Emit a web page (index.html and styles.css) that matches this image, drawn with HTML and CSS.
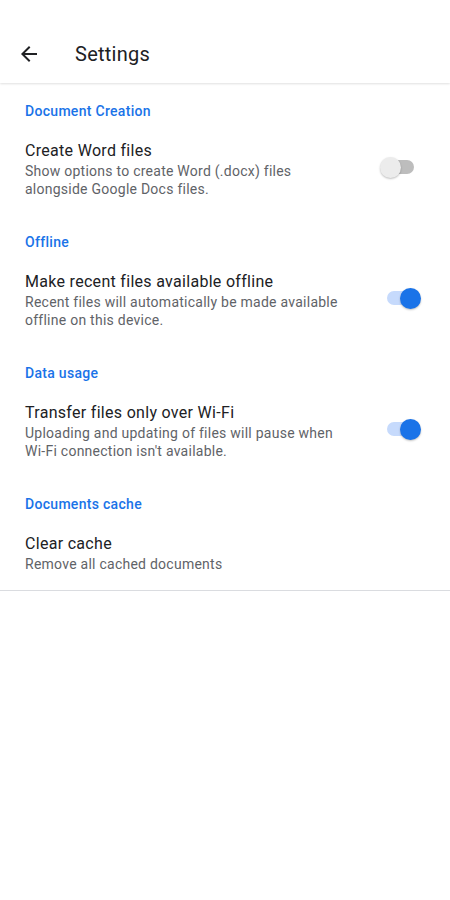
FILE: index.html
```html
<!DOCTYPE html>
<html>
<head>
<meta charset="utf-8">
<link rel="stylesheet" href="styles.css">
</head>
<body>
<div class="app">
  <header class="topbar">
    <button class="back" aria-label="Back">
      <svg width="24" height="24" viewBox="0 0 24 24"><path d="M20 11H7.83l5.59-5.59L12 4l-8 8 8 8 1.41-1.41L7.83 13H20v-2z" fill="#202124"/></svg>
    </button>
    <h1 class="title">Settings</h1>
  </header>
  <main class="list">
    <section class="section">
      <h2 class="section-title">Document Creation</h2>
      <div class="item">
        <div class="text">
          <div class="item-title">Create Word files</div>
          <div class="item-sub">Show options to create Word (.docx) files alongside Google Docs files.</div>
        </div>
        <div class="switch"><span class="track"></span><span class="thumb"></span></div>
      </div>
    </section>
    <section class="section">
      <h2 class="section-title">Offline</h2>
      <div class="item">
        <div class="text">
          <div class="item-title">Make recent files available offline</div>
          <div class="item-sub">Recent files will automatically be made available offline on this device.</div>
        </div>
        <div class="switch on"><span class="track"></span><span class="thumb"></span></div>
      </div>
    </section>
    <section class="section">
      <h2 class="section-title">Data usage</h2>
      <div class="item">
        <div class="text">
          <div class="item-title">Transfer files only over Wi-Fi</div>
          <div class="item-sub">Uploading and updating of files will pause when <span class="nowrap">Wi-Fi</span> connection isn't available.</div>
        </div>
        <div class="switch on"><span class="track"></span><span class="thumb"></span></div>
      </div>
    </section>
    <section class="section last">
      <h2 class="section-title">Documents cache</h2>
      <div class="item">
        <div class="text">
          <div class="item-title">Clear cache</div>
          <div class="item-sub">Remove all cached documents</div>
        </div>
      </div>
    </section>
  </main>
</div>
</body>
</html>
```
FILE: styles.css
```css
* { box-sizing: border-box; }
html, body { margin: 0; padding: 0; background: #fff; }
body { font-family: Roboto, "Noto Sans", Arial, sans-serif; color: #202124; }
.app { width: 450px; min-height: 900px; background: #fff; }
.topbar {
  height: 83px;
  display: flex;
  align-items: center;
  padding: 24px 0 0 17px;
  box-shadow: 0 1px 2px rgba(0,0,0,0.12);
  position: relative;
}
.back {
  width: 24px; height: 24px; padding: 0; border: 0; background: none;
  display: flex; align-items: center; justify-content: center;
}
.back svg { display: block; }
.title {
  margin: 0 0 0 34px;
  font-size: 20px;
  font-weight: 400;
  line-height: 24px;
  letter-spacing: 0.25px;
  color: #202124;
}
.list { border-bottom: 1px solid #dadce0; }
.section { padding: 18px 0 16px; }
.section + .section { padding-top: 18px; }
.section.last { padding-bottom: 17px; }
.section-title {
  margin: 0 25px;
  font-size: 14px;
  font-weight: 500;
  line-height: 20px;
  letter-spacing: 0.3px;
  color: #1a73e8;
}
.item {
  display: flex;
  align-items: center;
  padding: 20px 25px 0 25px;
}
.text { width: 318px; }
.item-title { font-size: 16px; line-height: 20px; letter-spacing: 0.3px; color: #202124; }
.item-sub { font-size: 14px; line-height: 18px; letter-spacing: 0.25px; color: #5f6368; margin-top: 1px; }
.nowrap { white-space: nowrap; }
.switch {
  position: relative;
  width: 41px;
  height: 20px;
  margin-left: 37px;
  margin-bottom: 5px;
}
.track {
  position: absolute;
  left: 7px; top: 3px;
  width: 27px; height: 14px;
  border-radius: 7px;
  background: #bdbdbd;
}
.thumb {
  position: absolute;
  left: 0; top: 0;
  width: 21px; height: 21px;
  border-radius: 50%;
  background: #ececec;
  box-shadow: 0 1px 2px rgba(0,0,0,0.25);
}
.switch.on .track { background: #c6dafc; }
.switch.on .thumb { left: auto; right: 0; background: #1a73e8; }
```
